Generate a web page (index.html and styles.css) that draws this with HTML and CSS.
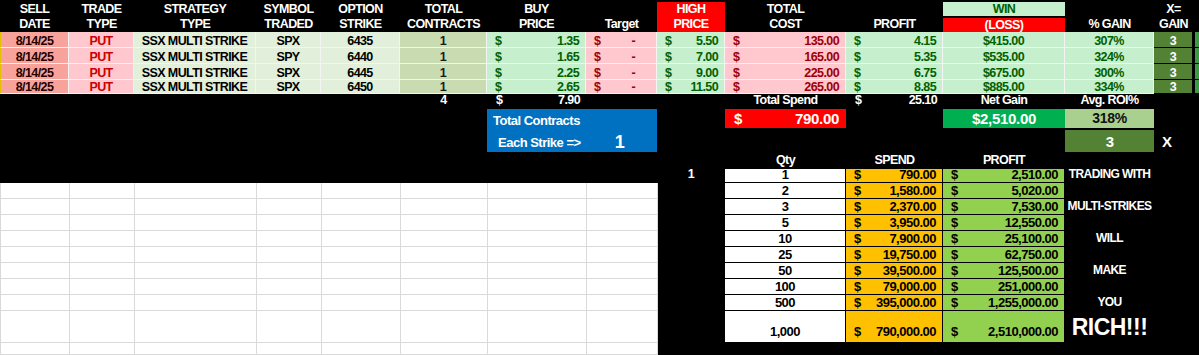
FILE: index.html
```html
<!DOCTYPE html>
<html lang="en">
<head>
<meta charset="utf-8">
<title>SSX Multi Strike</title>
<link rel="stylesheet" href="styles.css">
</head>
<body>
<div class="sheet">
  <!-- header (2 rows) -->
  <div class="h">SELL<br>DATE</div>
  <div class="h">TRADE<br>TYPE</div>
  <div class="h">STRATEGY<br>TYPE</div>
  <div class="h">SYMBOL<br>TRADED</div>
  <div class="h">OPTION<br>STRIKE</div>
  <div class="h">TOTAL<br>CONTRACTS</div>
  <div class="h">BUY<br>PRICE</div>
  <div class="h">Target</div>
  <div class="h h-red">HIGH<br>PRICE</div>
  <div class="h">TOTAL<br>COST</div>
  <div class="h">PROFIT</div>
  <div class="win">WIN</div>
  <div class="h">% GAIN</div>
  <div class="h">X=<br>GAIN</div>
  <div class="h"></div>
  <div class="loss">(LOSS)</div>

  <!-- data rows -->
  <div class="c date ctr">8/14/25</div>
  <div class="c put ctr">PUT</div>
  <div class="c lg ctr">SSX MULTI STRIKE</div>
  <div class="c lg ctr">SPX</div>
  <div class="c lg ctr">6435</div>
  <div class="c cnt ctr">1</div>
  <div class="c gn acct"><span>$</span><span>1.35</span></div>
  <div class="c rd acct"><span>$</span><span class="dash">-</span></div>
  <div class="c gn acct"><span>$</span><span>5.50</span></div>
  <div class="c rd acct"><span>$</span><span>135.00</span></div>
  <div class="c gn acct"><span>$</span><span>4.15</span></div>
  <div class="c gn ctr">$415.00</div>
  <div class="c gn ctr">307%</div>
  <div class="c xg ctr">3</div>
  <div class="edge"></div>

  <div class="c date ctr">8/14/25</div>
  <div class="c put ctr">PUT</div>
  <div class="c lg ctr">SSX MULTI STRIKE</div>
  <div class="c lg ctr">SPY</div>
  <div class="c lg ctr">6440</div>
  <div class="c cnt ctr">1</div>
  <div class="c gn acct"><span>$</span><span>1.65</span></div>
  <div class="c rd acct"><span>$</span><span class="dash">-</span></div>
  <div class="c gn acct"><span>$</span><span>7.00</span></div>
  <div class="c rd acct"><span>$</span><span>165.00</span></div>
  <div class="c gn acct"><span>$</span><span>5.35</span></div>
  <div class="c gn ctr">$535.00</div>
  <div class="c gn ctr">324%</div>
  <div class="c xg ctr">3</div>
  <div class="edge"></div>

  <div class="c date ctr">8/14/25</div>
  <div class="c put ctr">PUT</div>
  <div class="c lg ctr">SSX MULTI STRIKE</div>
  <div class="c lg ctr">SPX</div>
  <div class="c lg ctr">6445</div>
  <div class="c cnt ctr">1</div>
  <div class="c gn acct"><span>$</span><span>2.25</span></div>
  <div class="c rd acct"><span>$</span><span class="dash">-</span></div>
  <div class="c gn acct"><span>$</span><span>9.00</span></div>
  <div class="c rd acct"><span>$</span><span>225.00</span></div>
  <div class="c gn acct"><span>$</span><span>6.75</span></div>
  <div class="c gn ctr">$675.00</div>
  <div class="c gn ctr">300%</div>
  <div class="c xg ctr">3</div>
  <div class="edge"></div>

  <div class="c date ctr">8/14/25</div>
  <div class="c put ctr">PUT</div>
  <div class="c lg ctr">SSX MULTI STRIKE</div>
  <div class="c lg ctr">SPX</div>
  <div class="c lg ctr">6450</div>
  <div class="c cnt ctr">1</div>
  <div class="c gn acct"><span>$</span><span>2.65</span></div>
  <div class="c rd acct"><span>$</span><span class="dash">-</span></div>
  <div class="c gn acct"><span>$</span><span>11.50</span></div>
  <div class="c rd acct"><span>$</span><span>265.00</span></div>
  <div class="c gn acct"><span>$</span><span>8.85</span></div>
  <div class="c gn ctr">$885.00</div>
  <div class="c gn ctr">334%</div>
  <div class="c xg ctr">3</div>
  <div class="edge"></div>

  <!-- totals row -->
  <div class="s5"></div>
  <div class="t ctr">4</div>
  <div class="t acct"><span>$</span><span>7.90</span></div>
  <div></div>
  <div></div>
  <div class="t ctr">Total Spend</div>
  <div class="t acct"><span>$</span><span>25.10</span></div>
  <div class="t ctr">Net Gain</div>
  <div class="t ctr">Avg. ROI%</div>
  <div></div>
  <div></div>

  <!-- summary boxes -->
  <div class="s6 r2"></div>
  <div class="blue">
    <div class="bl1">Total Contracts</div>
    <div class="bl2">Each Strike =&gt;</div>
    <div class="bl3">1</div>
  </div>
  <div></div>
  <div class="box red acct"><span>$</span><span>790.00</span></div>
  <div></div>
  <div class="box green">$2,510.00</div>
  <div class="box roi">318%</div>
  <div></div>
  <div></div>

  <div></div>
  <div></div>
  <div></div>
  <div></div>
  <div class="box3">3</div>
  <div class="xlbl">X</div>
  <div></div>

  <!-- qty table header -->
  <div class="s8 r2"></div>
  <div></div>
  <div class="t ctr">Qty</div>
  <div class="t ctr">SPEND</div>
  <div class="t ctr">PROFIT</div>
  <div></div>
  <div></div>
  <div></div>

  <div class="one">1</div>
  <div class="q qty">1</div>
  <div class="q sp acct"><span>$</span><span>790.00</span></div>
  <div class="q pf acct"><span>$</span><span>2,510.00</span></div>
  <div class="msg">TRADING WITH</div>
  <div></div>
  <div></div>

  <!-- blank worksheet area -->
  <div class="blank">
    <span></span><span></span><span></span><span></span><span></span><span></span><span></span><span></span>
    <span></span><span></span><span></span><span></span><span></span><span></span><span></span><span></span>
    <span></span><span></span><span></span><span></span><span></span><span></span><span></span><span></span>
    <span></span><span></span><span></span><span></span><span></span><span></span><span></span><span></span>
    <span></span><span></span><span></span><span></span><span></span><span></span><span></span><span></span>
    <span></span><span></span><span></span><span></span><span></span><span></span><span></span><span></span>
    <span></span><span></span><span></span><span></span><span></span><span></span><span></span><span></span>
    <span></span><span></span><span></span><span></span><span></span><span></span><span></span><span></span>
    <span></span><span></span><span></span><span></span><span></span><span></span><span></span><span></span>
    <span></span><span></span><span></span><span></span><span></span><span></span><span></span><span></span>
  </div>
  <div class="r10"></div>

  <div class="q qty">2</div>
  <div class="q sp acct"><span>$</span><span>1,580.00</span></div>
  <div class="q pf acct"><span>$</span><span>5,020.00</span></div>
  <div class="msg"></div>
  <div></div>
  <div></div>

  <div class="q qty">3</div>
  <div class="q sp acct"><span>$</span><span>2,370.00</span></div>
  <div class="q pf acct"><span>$</span><span>7,530.00</span></div>
  <div class="msg">MULTI-STRIKES</div>
  <div></div>
  <div></div>

  <div class="q qty">5</div>
  <div class="q sp acct"><span>$</span><span>3,950.00</span></div>
  <div class="q pf acct"><span>$</span><span>12,550.00</span></div>
  <div class="msg"></div>
  <div></div>
  <div></div>

  <div class="q qty">10</div>
  <div class="q sp acct"><span>$</span><span>7,900.00</span></div>
  <div class="q pf acct"><span>$</span><span>25,100.00</span></div>
  <div class="msg">WILL</div>
  <div></div>
  <div></div>

  <div class="q qty">25</div>
  <div class="q sp acct"><span>$</span><span>19,750.00</span></div>
  <div class="q pf acct"><span>$</span><span>62,750.00</span></div>
  <div class="msg"></div>
  <div></div>
  <div></div>

  <div class="q qty">50</div>
  <div class="q sp acct"><span>$</span><span>39,500.00</span></div>
  <div class="q pf acct"><span>$</span><span>125,500.00</span></div>
  <div class="msg">MAKE</div>
  <div></div>
  <div></div>

  <div class="q qty">100</div>
  <div class="q sp acct"><span>$</span><span>79,000.00</span></div>
  <div class="q pf acct"><span>$</span><span>251,000.00</span></div>
  <div class="msg"></div>
  <div></div>
  <div></div>

  <div class="q qty">500</div>
  <div class="q sp acct"><span>$</span><span>395,000.00</span></div>
  <div class="q pf acct"><span>$</span><span>1,255,000.00</span></div>
  <div class="msg">YOU</div>
  <div></div>
  <div></div>

  <div class="q qty tall">1,000</div>
  <div class="q sp acct tall"><span>$</span><span>790,000.00</span></div>
  <div class="q pf acct tall"><span>$</span><span>2,510,000.00</span></div>
  <div class="msg rich">RICH!!!</div>
  <div></div>
  <div></div>
</div>
</body>
</html>
```

FILE: styles.css
```css
* { box-sizing: border-box; margin: 0; padding: 0; }

html, body { background: #000; }

body {
  margin: 0;
  font-family: "Liberation Sans", Arial, sans-serif;
  font-weight: 700;
  font-size: 12.5px;
  letter-spacing: -0.6px;
  color: #fff;
}

.sheet {
  display: grid;
  grid-template-columns: 69px 65px 122px 65px 79px 87px 99px 71px 68px 121px 97px 122px 89px 39px 6px;
  grid-template-rows: 16px 16px 16px 16px 16px 14px 15px 21px 22px 17px 14px repeat(8, 16px) 32px 12px;
  width: 1199px;
  height: 355px;
  overflow: hidden;
  background: #000;
}

/* spans */
.s5 { grid-column: span 5; }
.s6 { grid-column: span 6; }
.s8 { grid-column: span 8; }
.r2 { grid-row: span 2; }
.r10 { grid-row: span 10; }

/* header */
.h {
  grid-row: span 2;
  display: flex;
  flex-direction: column;
  justify-content: flex-end;
  align-items: center;
  text-align: center;
  line-height: 15px;
  white-space: nowrap;
  color: #fff;
}
.h-red { background: #ff0000; margin-top: 2px; }
.win, .loss {
  margin-top: 2px;
  display: flex;
  align-items: flex-end;
  justify-content: center;
  line-height: 13px;
}
.win { background: #c6efce; color: #006100; }
.loss { background: #ff0000; color: #fff; }

/* data cells */
.c {
  display: flex;
  align-items: flex-end;
  white-space: nowrap;
  line-height: 11px;
  border-right: 1px solid #f4f4f4;
  border-bottom: 1px solid #f4f4f4;
  color: #111;
}
.ctr { justify-content: center; }
.acct { justify-content: space-between; padding-left: 8px; padding-right: 6px; }
.dash { padding-right: 15px; }

.date { background: #f7a39c; color: #220000; border-left: 1px solid #e2c000; }
.put { background: #ffc7ce; color: #cc0000; }
.lg { background: #e2efda; color: #000; }
.cnt { background: #c8dbb1; color: #1a1a1a; }
.gn { background: #c6efce; color: #006100; }
.rd { background: #ffc7ce; color: #9c0006; }
.xg { background: #548235; color: #fff; border-right-color: #000; border-bottom-color: #000; }
.edge { background: linear-gradient(to right, #000 2px, #3b9a43 2px); border-bottom: 1px solid #000; }

/* totals row / labels */
.t {
  display: flex;
  align-items: flex-end;
  white-space: nowrap;
  line-height: 15px;
  padding-bottom: 1px;
  color: #fff;
}
.t.acct { padding-left: 9px; }

/* blue contracts box */
.blue {
  grid-column: span 2;
  grid-row: span 2;
  background: #0070c0;
  display: grid;
  grid-template-columns: 99px 71px;
  grid-template-rows: 21px 22px;
  font-size: 13px;
  letter-spacing: -0.5px;
  color: #fff;
  white-space: nowrap;
}
.bl1 {
  grid-column: span 2;
  display: flex;
  align-items: flex-end;
  padding-left: 6px;
  line-height: 14px;
  padding-bottom: 2px;
}
.bl2 {
  display: flex;
  align-items: flex-end;
  padding-left: 11px;
  line-height: 14px;
  padding-bottom: 2px;
}
.bl3 {
  display: flex;
  align-items: flex-end;
  justify-content: center;
  font-size: 18px;
  line-height: 18px;
  padding-bottom: 1px;
  padding-right: 4px;
}

/* summary boxes */
.box {
  margin-bottom: 2px;
  display: flex;
  align-items: center;
  font-size: 15px;
  letter-spacing: -0.3px;
  line-height: 19px;
  white-space: nowrap;
  color: #fff;
}
.red { background: #ff0000; }
.red.acct { padding-left: 9px; padding-right: 7px; }
.green { background: #00b050; justify-content: center; }
.roi { background: #a9d08e; color: #111; justify-content: center; font-size: 14px; }
.box3 {
  background: #548235;
  color: #fff;
  font-size: 15px;
  display: flex;
  align-items: center;
  justify-content: center;
}
.xlbl {
  display: flex;
  align-items: center;
  padding-left: 8px;
  font-size: 15px;
  color: #fff;
}

/* qty table */
.one {
  display: flex;
  align-items: flex-end;
  justify-content: center;
  line-height: 13px;
  padding-bottom: 2px;
  color: #fff;
}
.q {
  display: flex;
  align-items: flex-end;
  white-space: nowrap;
  font-size: 13px;
  letter-spacing: -0.5px;
  line-height: 13px;
  padding-bottom: 1px;
  border-right: 1px solid #000;
  border-bottom: 1px solid #000;
  color: #000;
}
.qty { background: #fff; justify-content: center; }
.sp { background: #ffc000; }
.pf { background: #92d050; }
.q.acct { padding-left: 8px; padding-right: 6px; }
.tall { padding-bottom: 4px; }

.msg {
  display: flex;
  align-items: flex-end;
  justify-content: center;
  white-space: nowrap;
  font-size: 12px;
  line-height: 13px;
  padding-bottom: 2px;
  color: #fff;
}
.rich { font-size: 23px; letter-spacing: -0.5px; line-height: 25px; padding-bottom: 3px; }

/* blank worksheet grid */
.blank {
  grid-column: span 8;
  grid-row: span 10;
  background: #fff;
  display: grid;
  grid-template-columns: 69px 65px 122px 65px 79px 87px 99px 71px;
  grid-template-rows: repeat(8, 16px) 32px 12px;
  border-left: 1px solid #d9d9d9;
}
.blank span {
  border-right: 1px solid #dadada;
  border-bottom: 1px solid #dadada;
}
```
